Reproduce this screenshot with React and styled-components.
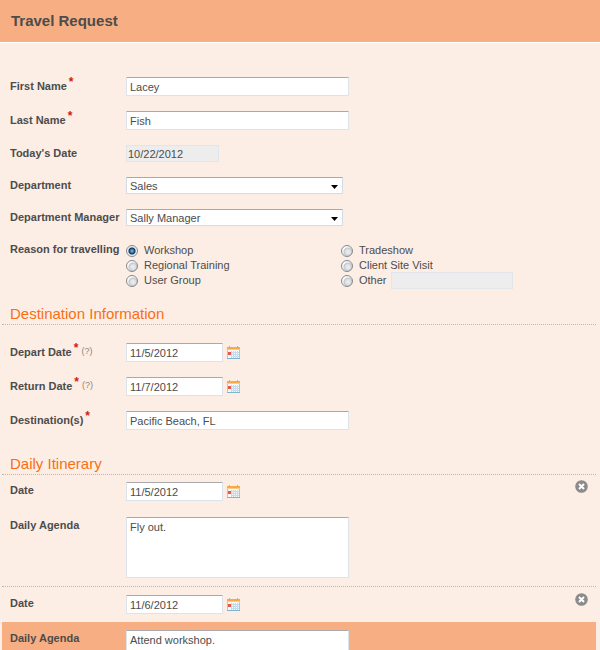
import styled, { createGlobalStyle } from 'styled-components';

const GlobalStyle = createGlobalStyle`
  *,
  *::before,
  *::after {
    box-sizing: border-box;
  }

  body {
    margin: 0;
    background-color: #fdeee5;
    color: #4c4c4c;
    font-family: 'Liberation Sans', Arial, sans-serif;
    font-size: 11px;
  }

  input,
  select,
  textarea,
  button {
    font: inherit;
    color: inherit;
    margin: 0;
  }
`;

const Page = styled.div`
  height: 100vh;
  overflow: hidden;
`;

const Header = styled.header`
  display: flex;
  align-items: center;
  height: 43px;
  padding: 0 11px 1px;
  background-color: #f7ae82;
  border-bottom: 1px solid #fff;
`;

const Title = styled.h1`
  margin: 0;
  font-size: 15px;
  line-height: 20px;
`;

const Form = styled.form`
  padding: 27px 4px 0 2px;
`;

const Section = styled.section`
  padding-bottom: ${(props) => props.$space || 0}px;
`;

const SectionTitle = styled.h2`
  margin: 0 0 ${(props) => (props.$spaced ? 11 : 0)}px;
  padding: 0 8px;
  height: 22px;
  border-bottom: 1px dotted #bdb8b4;
  color: #f86e14;
  font-size: 15px;
  font-weight: 400;
  line-height: 22px;
`;

const Row = styled.div`
  display: flex;
  align-items: flex-start;
  padding: ${(props) => (props.$tall ? '8px 8px' : '7px 8px 8px')};
  background-color: ${(props) => (props.$active ? '#f7ae82' : 'transparent')};
`;

const LabelCell = styled.div`
  flex: 0 0 116px;
  display: flex;
  font-weight: 700;
  line-height: ${(props) => (props.$required ? 18 : 16)}px;
  white-space: nowrap;
`;

const Star = styled.span`
  padding-left: 2px;
  color: #d01c10;
  font-size: 12px;
  line-height: 10px;
`;

const Help = styled.span`
  padding-left: 3px;
  color: #8c8580;
  font-size: 9px;
  font-weight: 400;
  line-height: 16px;
`;

const TextInput = styled.input`
  width: ${(props) => props.$width || 223}px;
  height: 19px;
  padding: 1px 3px 0;
  border: 1px solid #dde3ea;
  border-top-color: #a9a9ad;
  border-radius: 1px;
  background-color: #fff;
  outline: none;
`;

const MutedInput = styled.input`
  width: ${(props) => props.$width}px;
  height: 17px;
  padding: 0 1px;
  border: 1px solid #e2e6ea;
  background-color: #ededed;
  outline: none;
`;

const TextArea = styled.textarea`
  display: block;
  width: 223px;
  height: 61px;
  padding: 2px 3px;
  border: 1px solid #dde3ea;
  border-top-color: #a9a9ad;
  border-radius: 1px;
  background-color: #fff;
  line-height: 14px;
  outline: none;
  resize: none;
`;

const SelectBox = styled.div`
  position: relative;
  width: 217px;
  height: 17px;
`;

const Select = styled.select`
  appearance: none;
  display: block;
  width: 100%;
  height: 100%;
  padding: 0 16px 0 3px;
  border: 1px solid #d3dbe8;
  border-top-color: #a9a9ad;
  border-radius: 1px;
  background-color: #fff;
  outline: none;
`;

const Arrow = styled.svg`
  position: absolute;
  top: 8px;
  right: 5px;
  width: 7px;
  height: 4px;
  pointer-events: none;
`;

const IconButton = styled.button`
  display: flex;
  padding: 0;
  border: 0;
  background: none;
  cursor: pointer;
`;

const DateBox = styled.div`
  display: flex;
  align-items: flex-start;
  gap: 4px;
  height: 19px;

  ${IconButton} {
    padding-top: 3px;
  }
`;

const RemoveButton = styled(IconButton)`
  margin-left: auto;
  margin-top: -2px;
`;

const Choices = styled.div`
  display: grid;
  grid-template-columns: 215px auto;
  grid-auto-rows: 15px;
  padding-top: 2px;
`;

const Choice = styled.div`
  display: flex;
  align-items: center;
  gap: 3px;
`;

const ChoiceLabel = styled.label`
  padding: 0 1px 2px 3px;
`;

const Radio = styled.input`
  appearance: none;
  flex: none;
  width: 12px;
  height: 12px;
  border: 1px solid #85898e;
  border-radius: 50%;
  background: ${(props) =>
    props.defaultChecked
      ? 'radial-gradient(circle at 5px 5px, #7cc4ea 0, #2f6c9f 2px, #14304e 3px, #dfe4e9 4px, #f8f8f8 5px)'
      : 'radial-gradient(circle at 6px 6px, #f0f1f2 0, #d9dcdf 3px, #bfc3c7 4px, #fafafa 5px)'};
`;

function CalendarIcon() {
  return (
    <svg width='14' height='14' viewBox='0 0 14 14' aria-hidden='true'>
      <rect x='0' y='1' width='13' height='12' fill='#a4cbe0' />
      <rect x='1' y='4' width='11' height='8' fill='#f4f9fc' />
      <path
        d='M4 6.5h8M4 8.5h8M4 10.5h8M4.5 5v7M6.5 5v7M8.5 5v7M10.5 5v7'
        stroke='#c5dbe8'
        strokeWidth='1'
      />
      <rect x='0' y='1' width='13' height='3' fill='#f6ab48' />
      <path d='M2.5 0v2M10.5 0v2' stroke='#dda860' strokeWidth='1' />
      <path d='M0 3.5h13' stroke='#fbca84' strokeWidth='1' />
      <rect x='1' y='6' width='3' height='3' fill='#e5574a' />
      <path d='M0 12.5h13' stroke='#7fb4d0' strokeWidth='1' />
    </svg>
  );
}

function RemoveIcon() {
  return (
    <svg width='13' height='13' viewBox='0 0 13 13' aria-hidden='true'>
      <circle cx='6.5' cy='6.5' r='6.3' fill='#8b8b8b' />
      <path d='M4 4l5 5M9 4l-5 5' stroke='#fff' strokeWidth='2' />
    </svg>
  );
}

function Field({ id, label, required, help, tall, active, children }) {
  return (
    <Row $tall={tall} $active={active}>
      <LabelCell $required={required}>
        <label htmlFor={id}>{label}</label>
        {required && <Star>*</Star>}
        {help && <Help>(?)</Help>}
      </LabelCell>
      {children}
    </Row>
  );
}

function SelectField({ id, label, value }) {
  return (
    <Field id={id} label={label}>
      <SelectBox>
        <Select id={id} defaultValue={value}>
          <option>{value}</option>
        </Select>
        <Arrow viewBox='0 0 7 4'>
          <path d='M0 0h7L3.5 4z' fill='#000' />
        </Arrow>
      </SelectBox>
    </Field>
  );
}

function DateInput({ id, value }) {
  return (
    <DateBox>
      <TextInput id={id} $width={97} defaultValue={value} />
      <IconButton type='button' aria-label='Choose date'>
        <CalendarIcon />
      </IconButton>
    </DateBox>
  );
}

const Day = styled.div`
  border-bottom: 1px dotted #bdb8b4;

  & + & {
    padding-top: 1px;
  }
`;

const reasons = [
  'Workshop',
  'Tradeshow',
  'Regional Training',
  'Client Site Visit',
  'User Group',
  'Other',
];

const days = [
  { date: '11/5/2012', agenda: 'Fly out.' },
  { date: '11/6/2012', agenda: 'Attend workshop.', active: true },
];

function App() {
  return (
    <Page>
      <GlobalStyle />
      <Header>
        <Title>Travel Request</Title>
      </Header>
      <Form>
        <Section $space={7}>
          <Field id='first' label='First Name' required>
            <TextInput id='first' defaultValue='Lacey' />
          </Field>
          <Field id='last' label='Last Name' required>
            <TextInput id='last' defaultValue='Fish' />
          </Field>
          <Field id='today' label="Today's Date">
            <MutedInput id='today' $width={93} value='10/22/2012' readOnly />
          </Field>
          <SelectField id='department' label='Department' value='Sales' />
          <SelectField
            id='manager'
            label='Department Manager'
            value='Sally Manager'
          />
          <Row role='radiogroup' aria-labelledby='reason'>
            <LabelCell id='reason'>Reason for travelling</LabelCell>
            <Choices>
              {reasons.map((reason, i) => (
                <Choice key={reason}>
                  <Radio
                    type='radio'
                    name='reason'
                    id={`reason-${i}`}
                    defaultChecked={i === 0}
                  />
                  <ChoiceLabel htmlFor={`reason-${i}`}>{reason}</ChoiceLabel>
                  {reason === 'Other' && (
                    <MutedInput $width={122} aria-label='Other' readOnly />
                  )}
                </Choice>
              ))}
            </Choices>
          </Row>
        </Section>

        <Section $space={15}>
          <SectionTitle $spaced>Destination Information</SectionTitle>
          <Field id='depart' label='Depart Date' required help>
            <DateInput id='depart' value='11/5/2012' />
          </Field>
          <Field id='return' label='Return Date' required help>
            <DateInput id='return' value='11/7/2012' />
          </Field>
          <Field id='destination' label='Destination(s)' required>
            <TextInput id='destination' defaultValue='Pacific Beach, FL' />
          </Field>
        </Section>

        <Section>
          <SectionTitle>Daily Itinerary</SectionTitle>
          {days.map((day, i) => (
            <Day key={day.date}>
              <Field id={`date-${i}`} label='Date'>
                <DateInput id={`date-${i}`} value={day.date} />
                <RemoveButton type='button' aria-label='Remove day'>
                  <RemoveIcon />
                </RemoveButton>
              </Field>
              <Field
                id={`agenda-${i}`}
                label='Daily Agenda'
                tall
                active={day.active}
              >
                <TextArea id={`agenda-${i}`} defaultValue={day.agenda} />
              </Field>
            </Day>
          ))}
        </Section>
      </Form>
    </Page>
  );
}

export default App;
